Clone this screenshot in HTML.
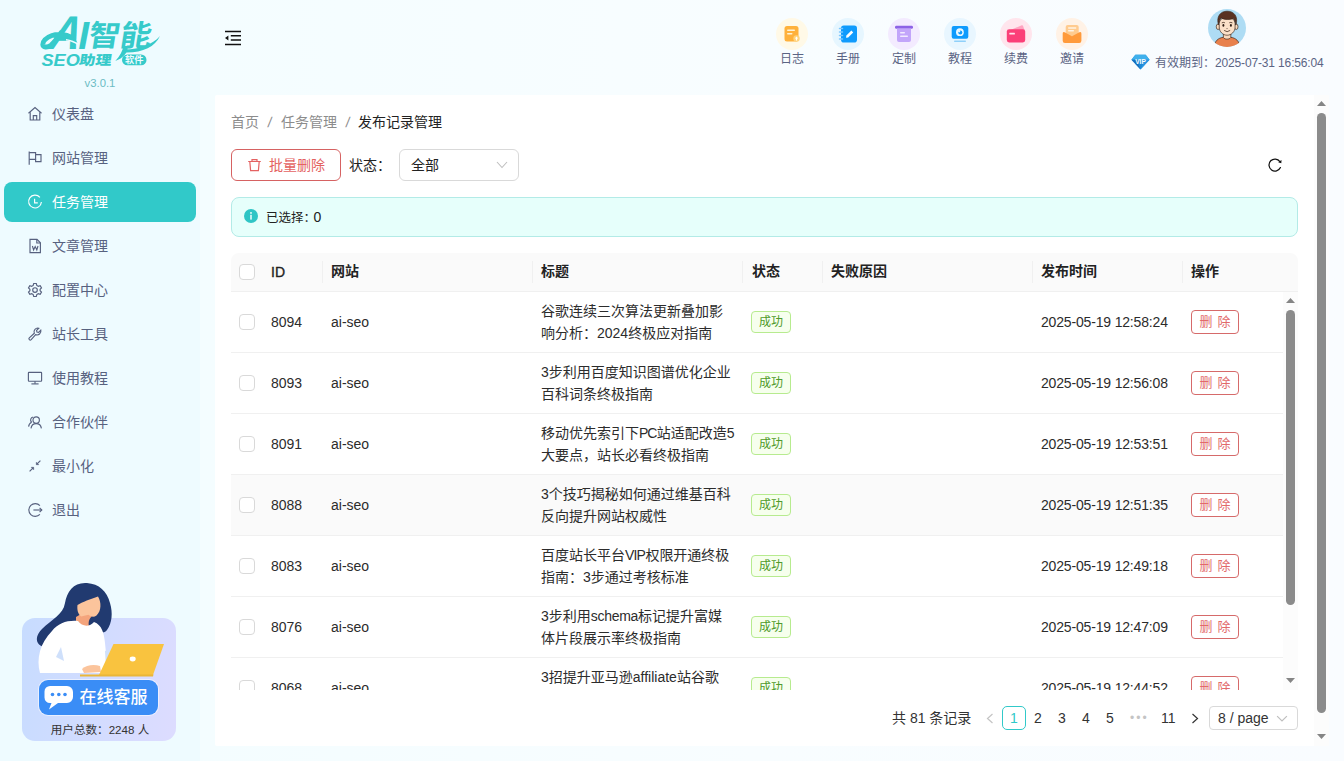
<!DOCTYPE html>
<html lang="zh-CN">
<head>
<meta charset="utf-8">
<title>发布记录管理</title>
<style>
*{box-sizing:border-box;margin:0;padding:0}
html,body{width:1344px;height:761px;overflow:hidden}
body{font-family:"Liberation Sans","Noto Sans CJK SC",sans-serif;font-size:14px;color:#2c2c2c;background:linear-gradient(90deg,#f4fdff 200px,#f8fdff 760px,#f9fcff 1344px);position:relative}
.abs{position:absolute}
/* sidebar */
#side{position:absolute;left:0;top:0;width:200px;height:761px;background:#eefbff}
#ver{position:absolute;left:0;width:200px;top:75px;text-align:center;font-size:11.300px;color:#6bbcc4;line-height:16px}
.mi{position:absolute;left:4px;width:192px;height:40px;border-radius:8px;color:#57617f;font-size:14px;line-height:40px}
.mi span{position:absolute;left:48px;top:0}
.mi svg{position:absolute;left:23px;top:12px;width:16px;height:16px;stroke:#57617f;fill:none;stroke-width:1.150}
.mi.on{background:#31c9c9;color:#fff}
.mi.on svg{stroke:#fff}
/* header */
.ti{position:absolute;top:18px;width:32px;height:32px;border-radius:50%}
.tl{position:absolute;top:50px;width:40px;text-align:center;font-size:12px;line-height:18px;color:#5b6484}
/* card */
#card{position:absolute;left:215px;top:95px;width:1099px;height:651px;background:#fff;border-radius:2px 0 0 2px}
.bc{position:absolute;top:112px;font-size:14px;line-height:20px;color:#8c8c8c}
/* table */
.th{position:absolute;top:252.400px;height:38px;line-height:38px;font-weight:bold;font-size:14px;color:#222}
.sep{position:absolute;top:261px;width:1px;height:22px;background:#f0f0f0}
.row{position:absolute;left:231px;width:1052px;height:61px;border-bottom:1px solid #f0f0f0}
.row > *{position:absolute}
.cb{left:8px;top:22px;width:16px;height:16px;border:1px solid #d9d9d9;border-radius:4px;background:#fff}
.id{left:40px;top:20px;line-height:20px}
.site{left:100px;top:20px;line-height:20px}
.tt{left:310px;top:8px;width:196px;line-height:22px;white-space:nowrap}
.tag{left:520px;top:19px;width:40px;height:22px;border:1px solid #b7eb8f;background:#f6ffed;color:#4f9a2a;border-radius:4px;font-size:12px;line-height:21.500px;text-align:center}
.tm{left:810px;top:20px;line-height:20px;white-space:nowrap;letter-spacing:-.17px}
.del{left:960px;top:18px;width:48px;height:24px;border:1px solid #d66a6a;color:#e26a6a;border-radius:4px;font-size:13px;word-spacing:1.500px;line-height:22px;text-align:center;background:#fff}
.pg{position:absolute;top:708px;line-height:20px;font-size:14px;color:#333}
</style>
</head>
<body>
<div id="side">
  <div id="logo"><svg class="abs" style="left:0;top:0" width="200" height="76" viewBox="0 0 200 76">
<g fill="#36caca">
<text transform="translate(48,48.800) skewX(-11) scale(.9,1)" font-family="Liberation Sans,sans-serif" font-weight="bold" font-style="italic" font-size="47.400">A</text>
<text transform="translate(78.200,48.800)" font-family="Liberation Sans,sans-serif" font-weight="bold" font-style="italic" font-size="39">I</text>
<text transform="translate(87.500,46.300) skewX(-9) scale(1.060,1)" font-family="Noto Sans CJK SC,sans-serif" font-weight="700" font-size="29.500">智</text>
<text transform="translate(118.800,46.300) skewX(-9) scale(1.060,1)" font-family="Noto Sans CJK SC,sans-serif" font-weight="700" font-size="29.500">能</text>
<text transform="translate(41.500,65.700) scale(1.070,1)" font-family="Liberation Sans,sans-serif" font-weight="bold" font-style="italic" font-size="17">SEO</text>
<text transform="translate(78.500,64.700) skewX(-9) scale(1.200,1)" font-family="Noto Sans CJK SC,sans-serif" font-weight="900" font-size="13.500">助理</text>
<path d="M71 37.200 C66 34.500 58 33.500 52 35.500 C46 37.500 42.500 41.500 42.800 44.500 C43.200 47.500 47 48 51 45.200 C55 42 58 37.500 61 33" fill="none" stroke="#36caca" stroke-width="5" stroke-linecap="round" stroke-linejoin="round"/>
<path d="M67 33.200 C72 35 75.500 38.500 77.500 43 C74 40.500 71.500 39.700 68 39.600 Z"/>
<path d="M115.300 61 C120 56 122.500 51 123.500 46 L128 46 C128 53 123 58 115.300 61 Z"/>
<path d="M125 49.500 C140 49 152 45 160 36 C155 47 142 53 125 52.500 Z"/>
<rect x="122" y="54.500" width="24.500" height="10.800" rx="5.400"/>
</g>
<path d="M66 39.800 C70.500 40.300 74.500 41.800 78.500 45" fill="none" stroke="#eefbff" stroke-width="1.400"/>
<text x="134.200" y="63.300" font-family="Noto Sans CJK SC,sans-serif" font-weight="bold" font-size="9.200" fill="#effbff" text-anchor="middle">软件</text>
</svg></div>
  <div id="ver">v3.0.1</div>
  <div id="menu">
<div class="mi" style="top:94px"><svg viewBox="0 0 16 16"><path d="M1.5 7.2 L8 1.6 L14.5 7.2"/><path d="M3.2 6.2 V14 H12.8 V6.2"/><path d="M6.3 14 V9.6 H9.7 V14"/></svg><span>仪表盘</span></div>
<div class="mi" style="top:138px"><svg viewBox="0 0 16 16"><path d="M2.2 1.5 V14.8"/><path d="M2.2 2.6 H8.6 V9.4 H2.2"/><path d="M8.6 4.6 H14 V11.6 H8.6 V9.4"/></svg><span>网站管理</span></div>
<div class="mi on" style="top:182px"><svg viewBox="0 0 16 16"><path d="M12.9 3.4 A6.4 6.4 0 1 0 14.4 8"/><path d="M7.600 4.800 V8.800 H10.800"/></svg><span>任务管理</span></div>
<div class="mi" style="top:226px"><svg viewBox="0 0 16 16"><path d="M3 1.4 H10 L13.4 4.8 V14.6 H3 Z"/><path d="M9.8 1.6 V5 H13.2"/><path d="M5.4 8 L6.6 12 L8.2 8.6 L9.8 12 L11 8"/></svg><span>文章管理</span></div>
<div class="mi" style="top:270px"><svg viewBox="0 0 16 16"><circle cx="8" cy="8" r="2.3"/><path d="M6.7 1.5 H9.3 L9.8 3.4 L11.3 4.3 L13.2 3.7 L14.5 6 L13.1 7.3 V8.7 L14.5 10 L13.2 12.3 L11.3 11.7 L9.8 12.6 L9.3 14.5 H6.7 L6.2 12.6 L4.7 11.7 L2.8 12.3 L1.5 10 L2.9 8.7 V7.3 L1.5 6 L2.8 3.7 L4.7 4.3 L6.2 3.4 Z"/></svg><span>配置中心</span></div>
<div class="mi" style="top:314px"><svg viewBox="0 0 16 16"><path d="M13.8 4.2 A3.8 3.8 0 0 1 8.6 8.6 L4.2 13.6 A1.3 1.3 0 0 1 2.3 11.8 L7.3 7.3 A3.8 3.8 0 0 1 11.8 2.2 L9.6 4.4 L9.9 6.1 L11.6 6.4 Z"/></svg><span>站长工具</span></div>
<div class="mi" style="top:358px"><svg viewBox="0 0 16 16"><rect x="1.4" y="2.4" width="13.2" height="8.8" rx="0.6"/><path d="M8 11.2 V13.8"/><path d="M4.4 13.9 H11.6"/></svg><span>使用教程</span></div>
<div class="mi" style="top:402px"><svg viewBox="0 0 16 16"><circle cx="9.2" cy="6" r="3.2"/><path d="M4 14.4 C4.4 11.4 6.4 9.6 9.2 9.6 C12 9.6 14 11.4 14.4 14.4"/><path d="M6.2 3 A3 3 0 0 0 4.6 8.2"/><path d="M4.6 8.2 C2.8 9 1.8 10.6 1.6 12.6"/></svg><span>合作伙伴</span></div>
<div class="mi" style="top:446px"><svg viewBox="0 0 16 16"><path d="M13.400 2.600 L9.600 6.400"/><path d="M9.300 4.200 V6.700 H11.800 Z" fill="#57617f" stroke-width="0.5"/><path d="M2.600 13.400 L6.400 9.600"/><path d="M4.200 9.300 H6.700 V11.800 Z" fill="#57617f" stroke-width="0.5"/></svg><span>最小化</span></div>
<div class="mi" style="top:490px"><svg viewBox="0 0 16 16"><path d="M12.9 3.6 A6.4 6.4 0 1 0 12.9 12.4"/><path d="M6.4 8 H14.6"/><path d="M12.6 5.8 L14.8 8 L12.6 10.2"/></svg><span>退出</span></div>
</div>
  <div id="kf">
<div class="abs" style="left:22px;top:617.500px;width:154px;height:123.500px;border-radius:13px;background:linear-gradient(100deg,#c7dcff,#dddcff)"></div>
<svg class="abs" style="left:22px;top:575px" width="154" height="110" viewBox="0 0 154 110">
<path d="M65 8 C52 7 45 16 43 28 C41 40 30 44 20 54 C12 62 14 70 22 72 L50 52 C60 50 70 52 76 56 C80 58 83 58 85 55 C90 48 91 38 88 28 C85 16 77 9 65 8 Z" fill="#213a70"/>
<path d="M54 42 C58 40 62 37 65 35 L70 41 C67 44 66 47 67 52 L54 52 Z" fill="#f4a47c"/>
<path d="M55.500 30 C60 27 69 24 76 21.500 C79.500 27 79.500 36 74.500 40.500 C71.500 42.800 68.500 41.500 66.500 39.800 L59 41.500 C55.500 38.500 55 34 55.500 30 Z" fill="#fbc49c"/>
<path d="M30 56 C36 48 46 45 56 46 C60 52 68 52 72 47 C80 50 82 58 83 68 L86 98 L18 98 C14 84 18 68 30 56 Z" fill="#ffffff"/>
<path d="M34 82 L39 72 L42 86 Z" fill="#cfe0fb"/>
<path d="M83 76 L89 74 L88 90 L84 92 Z" fill="#cfe0fb"/>
<path d="M60 94 C64 90 72 89 78 91 L79 97 L62 98 Z" fill="#fbc49c"/>
<path d="M91.500 69 L142 69 L131 100 L77 100 Z" fill="#f9c33f"/>
<path d="M58 99.500 L131.500 99.500 L131 101.500 L58 101.500 Z" fill="#eab637"/>
<ellipse cx="110.700" cy="84" rx="3" ry="2.400" fill="#fff"/>
</svg>
<div class="abs" style="left:39px;top:680px;width:119px;height:35px;border-radius:9px;background:#3a8df6;box-shadow:0 0 0 1px rgba(255,255,255,.55)"></div>
<svg class="abs" style="left:44px;top:685px" width="30" height="26" viewBox="0 0 30 26"><path d="M6 1 H23 A6 6 0 0 1 29 7 V12 A6 6 0 0 1 23 18 H14 L5 24.500 L7.500 18 H6 A5.500 5.500 0 0 1 .5 12.500 V6.500 A5.500 5.500 0 0 1 6 1 Z" fill="#fff"/><circle cx="8.500" cy="9.500" r="1.800" fill="#3a8df6"/><circle cx="14.800" cy="9.500" r="1.800" fill="#3a8df6"/><circle cx="21" cy="9.500" r="1.800" fill="#3a8df6"/></svg>
<div class="abs" style="left:79.500px;top:684.500px;font-size:17px;font-weight:500;line-height:26px;color:#fff;white-space:nowrap">在线客服</div>
<div class="abs" style="left:23px;top:720.500px;width:154px;text-align:center;font-size:11.600px;line-height:18px;color:#333">用户总数：2248 人</div>
</div>
</div>
<div id="head">
<svg class="abs" style="left:224px;top:30px" width="18" height="16" viewBox="0 0 18 16"><path d="M1 1.600 H17 M6.800 5.800 H17 M6.800 10.100 H17 M1 14.400 H17" stroke="#111" stroke-width="1.500" fill="none"/><path d="M1 8 L4.400 5.500 V10.500 Z" fill="#111"/></svg>
<div class="ti" style="left:776px;background:#fff9e7"><svg width="32" height="32" viewBox="0 0 32 32"><rect x="8.5" y="8" width="14" height="15.5" rx="2.5" fill="#ffb13b"/><rect x="11" y="11.5" width="8" height="1.6" rx=".8" fill="#fff3d6"/><rect x="11" y="15" width="5.5" height="1.6" rx=".8" fill="#fff3d6"/><circle cx="20.5" cy="20.5" r="3.2" fill="#ffd27a"/><path d="M20.5 18.6 L22.2 20.6 H21.1 V22.4 H19.9 V20.6 H18.8 Z" fill="#fff"/></svg></div><div class="tl" style="left:772px">日志</div>
<div class="ti" style="left:832px;background:#e6f6ff"><svg width="32" height="32" viewBox="0 0 32 32"><rect x="9" y="7.5" width="16" height="17" rx="2.800" fill="#0f9bfd"/><path d="M7.5 10.5 H10.5 M7.5 14 H10.5 M7.5 17.5 H10.5 M7.5 21 H10.5" stroke="#7cc8ff" stroke-width="1.5" stroke-linecap="round"/><path d="M14 19.8 L14.4 17.6 L19.4 12.6 L21.2 14.4 L16.2 19.4 Z" fill="#fff"/></svg></div><div class="tl" style="left:828px">手册</div>
<div class="ti" style="left:888px;background:#f3ebff"><svg width="32" height="32" viewBox="0 0 32 32"><rect x="7" y="7.800" width="18" height="3" rx="1.400" fill="#8d63e6"/><path d="M9 10.500 H23 V22 A2 2 0 0 1 21 24 H11 A2 2 0 0 1 9 22 Z" fill="#c2a5fa"/><rect x="12" y="14" width="5" height="1.5" rx=".7" fill="#f2eaff"/><rect x="12" y="17.5" width="8" height="1.5" rx=".7" fill="#f2eaff"/></svg></div><div class="tl" style="left:884px">定制</div>
<div class="ti" style="left:944px;background:#e8f6ff"><svg width="32" height="32" viewBox="0 0 32 32"><rect x="7.700" y="8" width="16.600" height="12.800" rx="2" fill="#0f9bfd"/><circle cx="15.900" cy="14.200" r="3.900" fill="#eaf7ff"/><circle cx="16.300" cy="14.600" r="2" fill="#0f9bfd"/><circle cx="15.200" cy="13.300" r="1.100" fill="#eaf7ff"/><rect x="10" y="22.500" width="12" height="1.400" rx=".7" fill="#8fd0fa"/></svg></div><div class="tl" style="left:940px">教程</div>
<div class="ti" style="left:1000px;background:#ffe5ed"><svg width="32" height="32" viewBox="0 0 32 32"><path d="M10.500 12 L21.800 7.200 Q22.600 7 23 7.800 L24.600 12.500 Z" fill="#ffa3c0"/><rect x="6.800" y="11.300" width="18.400" height="13.100" rx="2.300" fill="#fb3f78"/><rect x="9.300" y="14.800" width="5.600" height="1.800" rx=".5" fill="#ffe3ec"/></svg></div><div class="tl" style="left:996px">续费</div>
<div class="ti" style="left:1056px;background:#fff2e6"><svg width="32" height="32" viewBox="0 0 32 32"><rect x="9.700" y="7" width="13" height="11" rx="2" fill="#ffcb8f"/><rect x="12" y="9.300" width="8.400" height="1.400" rx=".7" fill="#fff3e4"/><rect x="12" y="12" width="6" height="1.400" rx=".7" fill="#fff3e4"/><path d="M6.700 15.500 Q6.700 13.300 8.600 14.300 L16 18.300 L23.400 14.300 Q25.400 13.300 25.400 15.500 V22.800 A2.200 2.200 0 0 1 23.200 25 H8.900 A2.200 2.200 0 0 1 6.700 22.800 Z" fill="#ff9a3b"/></svg></div><div class="tl" style="left:1052px">邀请</div>
<svg class="abs" style="left:1208px;top:8.800px" width="38" height="38" viewBox="0 0 40 40">
<defs><clipPath id="avc"><circle cx="20" cy="20" r="20"/></clipPath></defs>
<circle cx="20" cy="20" r="20" fill="#aedcf4"/>
<g clip-path="url(#avc)" stroke="#3b2418" stroke-width=".7" stroke-linejoin="round">
<path d="M6.500 41 C6.500 33.500 11 30.500 16 29.800 H24 C29 30.500 33.500 33.500 33.500 41 Z" fill="#e8804c"/>
<path d="M16.200 26 V30 C17.500 32.300 22.500 32.300 24 30 V26 Z" fill="#f9d9bd"/>
<ellipse cx="10.600" cy="18.700" rx="1.900" ry="2.900" fill="#f9d9bd"/><ellipse cx="29.700" cy="18.700" rx="1.900" ry="2.900" fill="#f9d9bd"/>
<path d="M11.800 15 C11.800 7 28.500 7 28.500 15 V19 C28.500 24 24.500 27.600 20.100 27.600 C15.800 27.600 11.800 24 11.800 19 Z" fill="#fbe0c8"/>
<path d="M11 16.500 C8.500 8 13 2.400 20 2.300 C27.500 2.200 32 8 29.400 16.500 C29 13.500 28 11.500 26.500 10 C23.500 11.500 17 11.500 14 9.500 C12.500 11 11.500 13.500 11 16.500 Z" fill="#5a3222"/>
<g stroke="none" fill="#2e1c14"><ellipse cx="16.200" cy="17.300" rx="1" ry="1.400"/><ellipse cx="24.100" cy="17.300" rx="1" ry="1.400"/></g>
<path d="M14.500 14.600 Q16.200 13.700 17.800 14.500 M22.400 14.500 Q24 13.700 25.700 14.600" fill="none" stroke-width=".8"/>
<path d="M19.400 20.600 Q20 21.200 20.700 20.500" fill="none" stroke-width=".6"/>
<path d="M17.300 22.800 Q20.100 25.200 23 22.800" fill="none" stroke-width=".8" stroke-linecap="round"/>
</g></svg>
<svg class="abs" style="left:1130.700px;top:53.500px" width="19" height="16" viewBox="0 0 20 17">
<path d="M4.500 .8 H15.500 L19.600 6 L10 16.600 L.4 6 Z" fill="#1f8ad8"/><path d="M4.500 .8 H15.500 L19.600 6 H.4 Z" fill="#3fb0ec"/><path d="M10 16.600 L.4 6 H5.500 Z" fill="#1670bf"/><path d="M10 16.600 L19.600 6 H14.500 Z" fill="#2a97e2"/>
<text x="10" y="10.600" font-family="Liberation Sans,sans-serif" font-size="7" font-weight="bold" fill="#fff" text-anchor="middle">VIP</text></svg>
<div class="abs" style="left:1155px;top:53.500px;font-size:12px;line-height:18px;color:#5b6484;white-space:nowrap">有效期到：<span style="letter-spacing:-.15px">2025-07-31 16:56:04</span></div>
</div>
<div id="card"></div>
<div id="content">
<div class="bc" style="left:231px">首页</div><div class="bc" style="left:267.500px;transform:skewX(-8deg)">/</div><div class="bc" style="left:281px">任务管理</div><div class="bc" style="left:345.500px;transform:skewX(-8deg)">/</div><div class="bc" style="left:358px;color:#222">发布记录管理</div>
<div class="abs" style="left:231px;top:149px;width:110px;height:32px;border:1px solid #d66262;border-radius:6px;color:#e46262;line-height:30px;font-size:14px"><svg class="abs" style="left:14.500px;top:8px" width="15" height="14" viewBox="0 0 15 14" fill="none" stroke="#e46262" stroke-width="1.200"><path d="M1.200 3.500 H13.800 M5 3.300 V1.600 H10 V3.300 M2.800 3.600 L3.600 12.600 H11.400 L12.200 3.600"/></svg><span class="abs" style="left:37px;top:0">批量删除</span></div>
<div class="abs" style="left:349px;top:155px;line-height:20px;color:#222">状态：</div>
<div class="abs" style="left:399px;top:149px;width:120px;height:32px;border:1px solid #d9d9d9;border-radius:6px;line-height:30px;color:#222"><span class="abs" style="left:11px;top:0">全部</span><svg class="abs" style="left:96px;top:11px" width="12" height="8" viewBox="0 0 12 8" fill="none" stroke="#bfbfbf" stroke-width="1.100"><path d="M1 1 L6 6.500 L11 1"/></svg></div>
<svg class="abs" style="left:1267px;top:157px" width="16" height="16" viewBox="0 0 16 16" fill="none" stroke="#111" stroke-width="1.250"><path d="M12.900 4.560 A6 6 0 1 0 13.440 10.540" stroke-linecap="round"/><path d="M14.500 2.900 L14.300 6.300 L11.200 5.300 Z" fill="#111" stroke="none"/></svg>
<div class="abs" style="left:231px;top:197px;width:1067px;height:40px;border:1px solid #b3ebe7;border-radius:8px;background:#e6fffb"><svg class="abs" style="left:12px;top:11px" width="14" height="14" viewBox="0 0 14 14"><circle cx="7" cy="7" r="7" fill="#2fc5c5"/><circle cx="7" cy="3.900" r=".9" fill="#fff"/><rect x="6.300" y="5.800" width="1.400" height="4.800" fill="#fff"/></svg><span class="abs" style="left:34px;top:9px;font-size:12.500px;line-height:20px;color:#222">已选择：<span style="font-size:14px;margin-left:-2.500px">0</span></span></div>
<div class="abs" style="left:231px;top:253px;width:1067px;height:39px;background:#fafafa;border-bottom:1px solid #f0f0f0;border-radius:8px 8px 0 0"></div>
<div class="cb abs" style="left:239px;top:264px"></div>
<div class="th" style="left:271px;top:253.300px;font-weight:normal;font-size:14px;-webkit-text-stroke:.35px #222">ID</div><div class="th" style="left:331px">网站</div><div class="th" style="left:541px">标题</div><div class="th" style="left:752px">状态</div><div class="th" style="left:831px">失败原因</div><div class="th" style="left:1041px">发布时间</div><div class="th" style="left:1191px">操作</div>
<div class="sep" style="left:322px"></div><div class="sep" style="left:532px"></div><div class="sep" style="left:742px"></div><div class="sep" style="left:822px"></div><div class="sep" style="left:1032px"></div><div class="sep" style="left:1182px"></div>
<div class="abs" id="tb" style="left:0;top:292px;width:1344px;height:398px;overflow:hidden">
<div class="row" style="top:0px"><div class="cb"></div><div class="id">8094</div><div class="site">ai-seo</div><div class="tt">谷歌连续三次算法更新叠加影<br>响分析：2024终极应对指南</div><div class="tag">成功</div><div class="tm">2025-05-19 12:58:24</div><div class="del">删 除</div></div>
<div class="row" style="top:61px"><div class="cb"></div><div class="id">8093</div><div class="site">ai-seo</div><div class="tt">3步利用百度知识图谱优化企业<br>百科词条终极指南</div><div class="tag">成功</div><div class="tm">2025-05-19 12:56:08</div><div class="del">删 除</div></div>
<div class="row" style="top:122px"><div class="cb"></div><div class="id">8091</div><div class="site">ai-seo</div><div class="tt">移动优先索引下<span style="letter-spacing:-1.100px">PC</span><span style="margin-left:.6px">站</span>适配改造5<br>大要点，站长必看终极指南</div><div class="tag">成功</div><div class="tm">2025-05-19 12:53:51</div><div class="del">删 除</div></div>
<div class="row" style="top:183px;background:#fafafa"><div class="cb"></div><div class="id">8088</div><div class="site">ai-seo</div><div class="tt">3个技巧揭秘如何通过维基百科<br>反向提升网站权威性</div><div class="tag">成功</div><div class="tm">2025-05-19 12:51:35</div><div class="del">删 除</div></div>
<div class="row" style="top:244px"><div class="cb"></div><div class="id">8083</div><div class="site">ai-seo</div><div class="tt">百度站长平台<span style="letter-spacing:-.9px">VIP</span><span style="margin-left:.5px">权</span>限开通终极<br>指南：3步通过考核标准</div><div class="tag">成功</div><div class="tm">2025-05-19 12:49:18</div><div class="del">删 除</div></div>
<div class="row" style="top:305px"><div class="cb"></div><div class="id">8076</div><div class="site">ai-seo</div><div class="tt">3步利用<span style="letter-spacing:-.3px">schema</span>标记提升富媒<br>体片段展示率终极指南</div><div class="tag">成功</div><div class="tm">2025-05-19 12:47:09</div><div class="del">删 除</div></div>
<div class="row" style="top:366px"><div class="cb"></div><div class="id">8068</div><div class="site">ai-seo</div><div class="tt">3招提升亚马逊affiliate站谷歌<br>外链建设终极指南</div><div class="tag">成功</div><div class="tm">2025-05-19 12:44:52</div><div class="del">删 除</div></div>
</div>
<div class="abs" style="left:1283px;top:292px;width:15px;height:398px;background:#fcfcfc"></div>
<svg class="abs" style="left:1286px;top:298px" width="9" height="5" viewBox="0 0 9 5"><path d="M0 5 L4.500 0 L9 5 Z" fill="#858585"/></svg>
<div class="abs" style="left:1286px;top:310px;width:9px;height:295px;border-radius:4.500px;background:#8b8b8b"></div>
<svg class="abs" style="left:1286px;top:678px" width="9" height="5" viewBox="0 0 9 5"><path d="M0 0 L4.500 5 L9 0 Z" fill="#858585"/></svg>
<div class="pg" style="left:892px">共 81 条记录</div>
<svg class="abs" style="left:986px;top:713px" width="8" height="11" viewBox="0 0 8 11" fill="none" stroke="#c4c4c4" stroke-width="1.200"><path d="M6.500 1 L1.500 5.500 L6.500 10"/></svg>
<div class="abs" style="left:1002px;top:706px;width:24px;height:24px;border:1px solid #31c9c9;border-radius:5px;color:#31c9c9;text-align:center;line-height:22px">1</div>
<div class="pg" style="left:1034px">2</div><div class="pg" style="left:1058px">3</div><div class="pg" style="left:1082px">4</div><div class="pg" style="left:1106px">5</div>
<div class="pg" style="left:1130px;color:#c4c4c4;letter-spacing:2px;font-size:12px">•••</div>
<div class="pg" style="left:1161px">11</div>
<svg class="abs" style="left:1191px;top:713px" width="8" height="11" viewBox="0 0 8 11" fill="none" stroke="#333" stroke-width="1.200"><path d="M1.500 1 L6.500 5.500 L1.500 10"/></svg>
<div class="abs" style="left:1209px;top:706px;width:89px;height:24px;border:1px solid #d9d9d9;border-radius:4px;line-height:22px;color:#333"><span class="abs" style="left:8px;top:0">8 / page</span><svg class="abs" style="left:66px;top:8px" width="12" height="7.600" viewBox="0 0 11 7" fill="none" stroke="#bfbfbf" stroke-width="1.100"><path d="M1 1 L5.500 5.500 L10 1"/></svg></div>
<div class="abs" style="left:1314px;top:95px;width:15px;height:651px;background:#fcfcfc"></div>
<svg class="abs" style="left:1317px;top:101px" width="9" height="5" viewBox="0 0 9 5"><path d="M0 5 L4.500 0 L9 5 Z" fill="#858585"/></svg>
<div class="abs" style="left:1317px;top:113px;width:9px;height:600px;border-radius:4.500px;background:#8b8b8b"></div>
<svg class="abs" style="left:1317px;top:734px" width="9" height="5" viewBox="0 0 9 5"><path d="M0 0 L4.500 5 L9 0 Z" fill="#858585"/></svg>
</div>
</body>
</html>
